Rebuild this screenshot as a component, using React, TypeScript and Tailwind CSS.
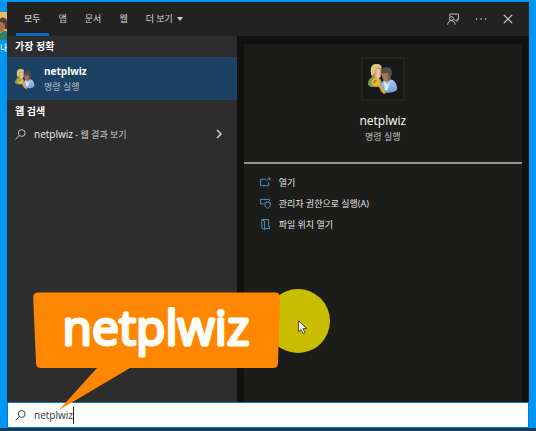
import React, { useState } from 'react';

type IconProps = { className?: string };

function UsersKeyIcon({ className }: IconProps) {
  return (
    <svg viewBox="0 0 32 32" className={className} aria-hidden="true">
      <defs>
        <linearGradient id="skinLight" x1="0" x2="1">
          <stop offset="0" stopColor="#b98a62" />
          <stop offset="0.6" stopColor="#efcfae" />
          <stop offset="1" stopColor="#b88a66" />
        </linearGradient>
        <linearGradient id="skinDark" x1="0" x2="1">
          <stop offset="0" stopColor="#a87652" />
          <stop offset="0.5" stopColor="#a87652" />
          <stop offset="1" stopColor="#5e3f2c" />
        </linearGradient>
        <linearGradient id="blueShirt" x1="0" y1="0" x2="0" y2="1">
          <stop offset="0" stopColor="#a9cdf2" />
          <stop offset="1" stopColor="#6d9fdc" />
        </linearGradient>
      </defs>
      <path d="M0 22c0-6 3-8.500 7-8.500s8 2 8 8.500c-2 3-13 4-15 0Z" fill="#7f9c50" />
      <path d="M3 6c0-4 2-6 6-6s5.500 2 5.500 5v7l-3 2H4.500C3 12 3 9 3 6Z" fill="#b08b4c" />
      <path d="M6 5h8v6.500c0 2.500-1.500 4-4 4S6 12 6 9.500Z" fill="url(#skinLight)" />
      <path d="M3 7c0-4 2-7 6.500-7 3 0 5 1.500 5 4.500C11 3.500 8 4 7 7l-.5 4L4 12C3 10 3 9 3 7Z" fill="#dcc67e" />
      <path d="M13.500 29c-.5-8 2-13 8-13 6 0 9.500 4 9.500 11-1 4-14 5-17.500 2Z" fill="url(#blueShirt)" />
      <path d="m17 18 3.500 4 3-4-2.500 10h-3Z" fill="#d9e9f8" />
      <path d="M15 8h9.500v5.500c0 3.500-2 5.500-4.500 5.500s-5-3-5-7Z" fill="url(#skinDark)" />
      <path d="M14.500 10c-.5-4.500 1.500-6.500 5.500-6.500s6 2.500 5.500 7l-1.500 4c-.5-4-1.500-5-3.500-5Z" fill="#4e4d50" />
      <path d="m10 20 8 11.500" stroke="#e9a830" strokeWidth="2.800" />
      <path d="M4 21c-1-4 2-6 5-6s5 3 4 6c-1 2.500-2 3-3 3-3 0-5-1-6-3Z" fill="#f0b43c" />
      <path d="M5.500 19.500c0-2 2-3 4-2.500l-3 4Z" fill="#8f8a35" />
    </svg>
  );
}

function SearchIcon({ className }: IconProps) {
  return (
    <svg viewBox="0 0 12 12" className={className} fill="none" stroke="currentColor" aria-hidden="true">
      <circle cx="7.3" cy="4.4" r="3.7" />
      <path d="M4.7 7.1.6 11.4" />
    </svg>
  );
}

function FeedbackIcon({ className }: IconProps) {
  return (
    <svg viewBox="0 0 12 12" className={className} fill="none" stroke="currentColor" strokeWidth="0.9" aria-hidden="true">
      <path d="M2.8 3.400V1h8.600v5.700h-1.500v1.700L8.200 6.700H7.400" />
      <circle cx="4.400" cy="5.600" r="2" />
      <path d="M.7 11.800c0-2.600 1.500-4.200 3.700-4.200s3.700 1.600 3.700 4.200" />
    </svg>
  );
}

function OpenIcon({ className }: IconProps) {
  return (
    <svg viewBox="0 0 12 12" className={className} fill="none" stroke="currentColor" aria-hidden="true">
      <path d="M7 2.500H.6v7h8.900V5.500M7.500 4.300l2.500-2.500M8.500 1.200h2.400v2.400" />
    </svg>
  );
}

function AdminIcon({ className }: IconProps) {
  return (
    <svg viewBox="0 0 12 12" className={className} fill="none" stroke="currentColor" aria-hidden="true">
      <path d="M4.500 6.500H.6v-5h9.600v2" />
      <path d="M8.300 4.300 11.200 5.200v2.300c0 1.900-1.200 2.900-2.900 3.700-1.700-.8-2.900-1.800-2.900-3.700V5.200Z" />
    </svg>
  );
}

function FolderIcon({ className }: IconProps) {
  return (
    <svg viewBox="0 0 12 12" className={className} fill="none" stroke="currentColor" aria-hidden="true">
      <path d="M2 .6h7.500v7.900M5 10.500h5.500v-2h-1M2 .6v9.200l3 1.700V2.300L2 .6Z" />
    </svg>
  );
}

const tabs = ['모두', '앱', '문서', '웹'];

const actions = [
  { label: '열기', Icon: OpenIcon },
  { label: '관리자 권한으로 실행(A)', Icon: AdminIcon },
  { label: '파일 위치 열기', Icon: FolderIcon },
];

function Header() {
  return (
    <header className="flex h-[34px] shrink-0 items-stretch justify-between bg-[#222222] text-[9px] text-[#d2d2d2]">
      <nav className="flex gap-[2px] pl-[9px]">
        {tabs.map((tab, i) => (
          <button
            key={tab}
            className={
              i === 0
                ? 'border-b-[3px] border-[#0c69bd] px-2 pt-[2px] text-white'
                : 'border-b-[3px] border-transparent px-2 pt-[2px]'
            }
          >
            {tab}
          </button>
        ))}
        <button className="flex items-center gap-1 border-b-[3px] border-transparent px-2 pt-[2px]">
          더 보기
          <svg viewBox="0 0 6 4" className="h-1 w-[6px]" aria-hidden="true">
            <path d="M0 0h6L3 4Z" fill="currentColor" />
          </svg>
        </button>
      </nav>
      <div className="flex items-center gap-4 pr-4">
        <button aria-label="피드백">
          <FeedbackIcon className="size-3" />
        </button>
        <button aria-label="옵션">
          <svg viewBox="0 0 12 12" className="size-3" fill="currentColor" aria-hidden="true">
            <circle cx="1.500" cy="6" r="0.8" />
            <circle cx="6" cy="6" r="0.8" />
            <circle cx="10.500" cy="6" r="0.8" />
          </svg>
        </button>
        <button aria-label="닫기">
          <svg viewBox="0 0 10 10" className="size-[10px]" fill="none" stroke="currentColor" strokeWidth="1.200" aria-hidden="true">
            <path d="m.8.8 8.400 8.400M9.200.8.8 9.200" />
          </svg>
        </button>
      </div>
    </header>
  );
}

function Results() {
  return (
    <section className="w-[44%] shrink-0 bg-[#2d2d2d]">
      <h2 className="px-2 text-[10px]/[21px] font-semibold text-white">가장 정확</h2>
      <button className="flex h-[43px] w-full items-center gap-[9px] bg-[#1c4162] px-2 text-left">
        <UsersKeyIcon className="size-5 shrink-0" />
        <span>
          <span className="block text-[10px]/4 font-bold text-white">netplwiz</span>
          <span className="block text-[9px]/4 text-[#b4c3d0]">명령 실행</span>
        </span>
      </button>
      <h2 className="px-2 text-[10px]/[22px] font-semibold text-white">웹 검색</h2>
      <button className="flex h-6 w-full items-center gap-2 pl-2 pr-[14px] text-left text-[#d0d0d0]">
        <SearchIcon className="size-[11px] shrink-0" />
        <span className="flex-1 text-[9px]">
          <span className="text-[10px] text-[#eeeeee]">netplwiz</span> - 웹 결과 보기
        </span>
        <svg viewBox="0 0 8 10" className="h-[10px] w-2" fill="none" stroke="currentColor" strokeWidth="1.500" aria-hidden="true">
          <path d="m2 1 4 4-4 4" />
        </svg>
      </button>
    </section>
  );
}

function Preview() {
  return (
    <section className="flex-1 bg-[#11110f] px-[7px] pt-2">
      <div className="h-full bg-[#1c1c1a]">
        <div className="flex flex-col items-center border-b-2 border-[#96928c] pt-[13px] pb-[18px]">
          <div className="flex size-11 items-center justify-center border-2 border-[#242424] bg-[#181816]">
            <UsersKeyIcon className="size-[30px]" />
          </div>
          <h1 className="mt-[10px] text-xs/[19px] text-white">netplwiz</h1>
          <p className="text-[9px]/[14px] text-[#c2c2c2]">명령 실행</p>
        </div>
        <ul className="pt-2 pl-4">
          {actions.map(({ label, Icon }) => (
            <li key={label}>
              <button className="flex h-[21px] items-center gap-2 text-[9px] text-[#e4e4e4]">
                <Icon className="size-[11px] text-[#5b9bcb]" />
                {label}
              </button>
            </li>
          ))}
        </ul>
      </div>
    </section>
  );
}

function SearchBox() {
  const [query, setQuery] = useState('netplwiz');
  return (
    <label className="flex h-[26px] shrink-0 items-center border border-[#0879cf] bg-white pl-[7px] text-[#333333]">
      <SearchIcon className="mr-2 size-[11px]" />
      <input
        aria-label="검색"
        value={query}
        onChange={(e) => setQuery(e.target.value)}
        className="field-sizing-content bg-transparent text-[10px] outline-none"
      />
      <span className="h-[17px] w-px bg-[#222222]" />
    </label>
  );
}

function DesktopShortcut() {
  return (
    <div className="absolute top-3 left-0 w-[7px] overflow-hidden">
      <svg viewBox="0 0 7 28" className="h-7 w-[7px]" aria-hidden="true">
        <path d="M0 0h7v27H0Z" fill="#e7bd60" />
        <path d="M0 7c3-3 6-1 7 2v8H0Z" fill="#4f4030" />
        <path d="M0 10c3 0 5 2 5 5s-2 5-5 5Z" fill="#aa704c" />
        <path d="M0 21c4-3 7-2 7-1v8H0Z" fill="#2d8065" />
      </svg>
      <span className="block text-[9px]/4 whitespace-nowrap text-white">내</span>
    </div>
  );
}

function Annotations() {
  return (
    <div className="pointer-events-none absolute inset-0">
      <div className="absolute top-[289px] left-[266px] size-16 rounded-full bg-[#c9bd00]" />
      <svg viewBox="0 0 10 15" className="absolute top-[320px] left-[298px] h-[15px] w-[10px]" aria-hidden="true">
        <path d="M.6.8v11l2.500-2.400 1.900 4.200 2-.9-1.900-4.100h3.500Z" fill="#fff" stroke="#222" strokeWidth="0.8" />
      </svg>
      <svg viewBox="0 0 247 120" className="absolute top-[292px] left-[33px] h-[120px] w-[247px]">
        <path
          d="M5 .5h237q5 0 5 5L245 71q0 5-5 5H97L26 118 64 76H8q-5 0-5-5L.2 5.500Q0 .5 5 .5Z"
          fill="#ff8600"
        />
        <text
          x="123"
          y="53"
          textAnchor="middle"
          strokeLinejoin="round"
          className="fill-[#fffdf8] stroke-[#fffdf8] stroke-3 font-['Open_Sans'] text-[48px] font-medium"
        >
          netplwiz
        </text>
      </svg>
    </div>
  );
}

export default function App() {
  return (
    <div className="relative flex h-screen flex-col overflow-hidden bg-[#0096f3] font-['Open_Sans','Noto_Sans_CJK_KR',sans-serif]">
      <DesktopShortcut />
      <main className="mr-[7px] ml-[7px] flex min-h-0 flex-1 flex-col pt-[2px]">
        <Header />
        <div className="flex min-h-0 flex-1">
          <Results />
          <Preview />
        </div>
        <SearchBox />
      </main>
      <footer className="h-[3px] shrink-0 bg-[#153b55]" />
      <Annotations />
    </div>
  );
}
